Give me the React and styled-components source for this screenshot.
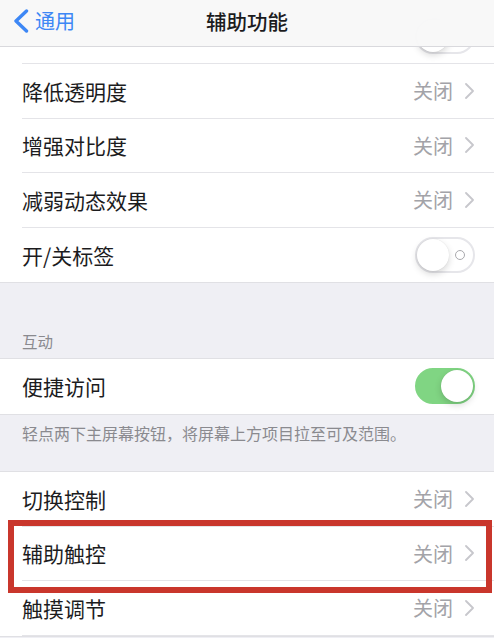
import React from 'react';
import styled, { createGlobalStyle } from 'styled-components';

const GlobalStyle = createGlobalStyle`
    html, body {
        margin: 0;
        padding: 0;
        background: #efeff4;
    }
    body {
        font-family: "Noto Sans CJK SC", "Noto Sans", sans-serif;
        -webkit-font-smoothing: antialiased;
    }
`;

const Screen = styled.div`
    position: relative;
    width: 494px;
    height: 638px;
    overflow: hidden;
    background: #efeff4;
`;

const NavBar = styled.div`
    position: absolute;
    top: 0;
    left: 0;
    right: 0;
    height: 47px;
    box-sizing: border-box;
    padding-bottom: 5px;
    display: grid;
    grid-template-columns: 1fr auto 1fr;
    align-items: center;
    background: rgba(248, 248, 248, 0.97);
    border-bottom: 1px solid #d9d9dd;
    z-index: 2;
`;

const BackButton = styled.div`
    display: flex;
    align-items: center;
    gap: 6px;
    padding-left: 13px;
    color: #3d87f5;
    font-size: 20px;
`;

const Title = styled.div`
    font-size: 20.5px;
    font-weight: 500;
    color: #1c1c1e;
`;

const Content = styled.div`
    padding-top: 9.5px;
`;

const Group = styled.div`
    background: #fff;
    border-top: ${props => (props.flush ? 'none' : '1px solid #e0e0e4')};
    border-bottom: 1px solid #e0e0e4;
`;

const Row = styled.div`
    position: relative;
    height: 54.5px;
    padding-left: 22px;
    box-sizing: border-box;
    display: flex;
`;

const RowBody = styled.div`
    flex: 1;
    display: flex;
    align-items: center;
    justify-content: space-between;
    padding-right: 20px;
    border-bottom: ${props => (props.last ? 'none' : '1px solid #e4e4e8')};
`;

const Label = styled.div`
    font-size: 21px;
    color: #1c1c1e;
`;

const Detail = styled.div`
    display: flex;
    align-items: center;
    gap: 12px;
    font-size: 20px;
    color: #a3a3a8;
`;

const SectionHeader = styled.div`
    height: 75px;
    box-sizing: border-box;
    display: flex;
    align-items: flex-end;
    padding: 0 22px 6px;
    font-size: 15.5px;
    line-height: 22px;
    color: #8a8a8f;
`;

const SectionFooter = styled.div`
    height: 56.5px;
    box-sizing: border-box;
    padding: 7.5px 22px 0;
    font-size: 16px;
    line-height: 22px;
    color: #8a8a8f;
`;

const Track = styled.div`
    position: relative;
    width: 60px;
    height: 36px;
    box-sizing: border-box;
    border-radius: 18px;
    margin-right: -1px;
    background: ${props => (props.on ? '#80d583' : '#fff')};
    border: 2px solid ${props => (props.on ? '#80d583' : '#e6e6ea')};
`;

const Knob = styled.div`
    position: absolute;
    top: 0;
    left: ${props => (props.on ? '24px' : '0')};
    width: 32px;
    height: 32px;
    border-radius: 50%;
    background: #fff;
    box-shadow: 0 3px 7px rgba(0, 0, 0, 0.16), 0 0 1px rgba(0, 0, 0, 0.12);
`;

// "O" mark shown on an off switch when on/off labels are enabled
const OffMark = styled.div`
    position: absolute;
    top: 11px;
    right: 8px;
    width: 10px;
    height: 10px;
    box-sizing: border-box;
    border-radius: 50%;
    border: 1.5px solid #a9a9ad;
`;

const Highlight = styled.div`
    position: absolute;
    top: -7px;
    left: 8px;
    right: 2px;
    bottom: -12px;
    border: 6px solid #c9362c;
    pointer-events: none;
    z-index: 1;
`;

const Chevron = () => (
    <svg width="9" height="16" viewBox="0 0 9 16">
        <polyline points="1,1 8,8 1,15" fill="none" stroke="#c7c7cc" strokeWidth="1.8" strokeLinecap="round" strokeLinejoin="round" />
    </svg>
);

const BackChevron = () => (
    <svg width="16" height="24" viewBox="0 0 16 24">
        <polyline points="13.5,2 3,12 13.5,22" fill="none" stroke="#3d87f5" strokeWidth="3.4" strokeLinecap="round" strokeLinejoin="round" />
    </svg>
);

const Switch = ({ on, labels }) => (
    <Track on={on}>
        {!on && labels && <OffMark />}
        <Knob on={on} />
    </Track>
);

const LinkRow = ({ label, value, last, children }) => (
    <Row>
        <RowBody last={last}>
            <Label>{label}</Label>
            <Detail>
                {value}
                <Chevron />
            </Detail>
        </RowBody>
        {children}
    </Row>
);

const SwitchRow = ({ label, on, labels, last }) => (
    <Row>
        <RowBody last={last}>
            <Label>{label}</Label>
            <Switch on={on} labels={labels} />
        </RowBody>
    </Row>
);

export default function App() {
    return (
        <>
            <GlobalStyle />
            <Screen>
                <NavBar>
                    <BackButton>
                        <BackChevron />
                        通用
                    </BackButton>
                    <Title>辅助功能</Title>
                    <div />
                </NavBar>

                <Content>
                    <Group flush>
                        <SwitchRow label="" on={false} />
                        <LinkRow label="降低透明度" value="关闭" />
                        <LinkRow label="增强对比度" value="关闭" />
                        <LinkRow label="减弱动态效果" value="关闭" />
                        <SwitchRow label="开/关标签" on={false} labels last />
                    </Group>

                    <SectionHeader>互动</SectionHeader>
                    <Group>
                        <SwitchRow label="便捷访问" on last />
                    </Group>
                    <SectionFooter>轻点两下主屏幕按钮，将屏幕上方项目拉至可及范围。</SectionFooter>

                    <Group>
                        <LinkRow label="切换控制" value="关闭" />
                        <LinkRow label="辅助触控" value="关闭">
                            <Highlight />
                        </LinkRow>
                        <LinkRow label="触摸调节" value="关闭" />
                    </Group>
                </Content>
            </Screen>
        </>
    );
}
